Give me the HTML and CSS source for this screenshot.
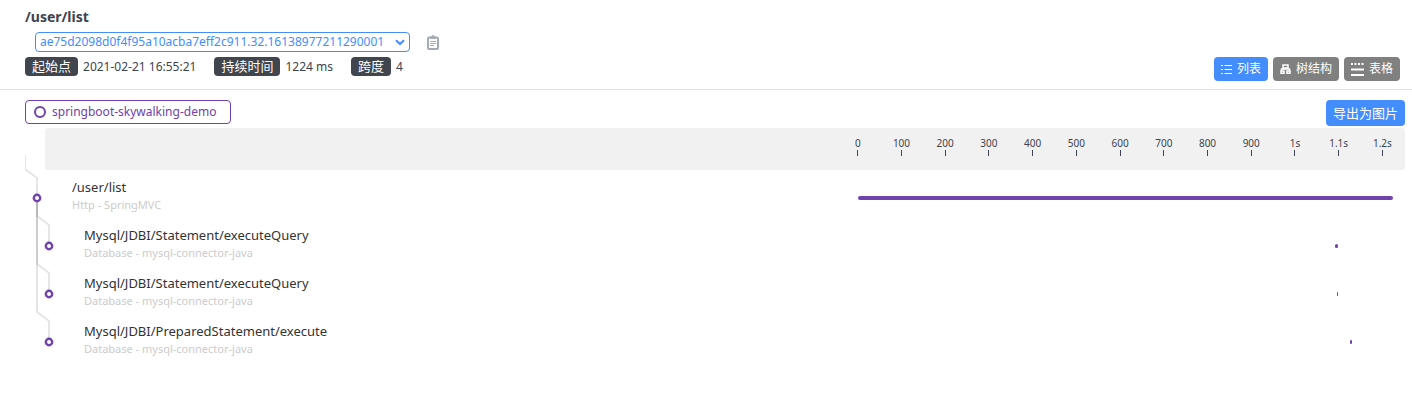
FILE: index.html
```html
<!DOCTYPE html>
<html lang="zh-CN">
<head>
    <meta charset="UTF-8">
    <meta name="viewport" content="width=device-width, initial-scale=1.0">
    <title>/user/list</title>
    <link rel="stylesheet" href="styles.css">
</head>
<body>
    <header class="trace-header">
        <div class="trace-info">
            <h1 class="trace-title">/user/list</h1>
            <div class="trace-id">
                <div class="select-box">
                    <select class="trace-select" aria-label="Trace ID">
                        <option>ae75d2098d0f4f95a10acba7eff2c911.32.16138977211290001</option>
                    </select>
                    <svg class="select-arrow" width="10" height="7" viewBox="0 0 10 7" aria-hidden="true"><path d="M1 1.200 5 5l4-3.800" fill="none" stroke="currentColor" stroke-width="2"/></svg>
                </div>
                <button type="button" class="copy" aria-label="Copy">
                    <svg width="12" height="15" viewBox="0 0 12 15"><rect x="1" y="2.500" width="10" height="11.500" rx="1" fill="none" stroke="currentColor" stroke-width="2"/><path d="M3 1.500h1.500a1.500 1.500 0 0 1 3 0H9V4H3z" fill="currentColor"/><path d="M3 6.500h6M3 8.500h6M3 10.500h4" stroke="currentColor"/></svg>
                </button>
            </div>
            <dl class="facts">
                <div class="fact"><dt>起始点</dt><dd>2021-02-21 16:55:21</dd></div>
                <div class="fact"><dt>持续时间</dt><dd>1224 ms</dd></div>
                <div class="fact"><dt>跨度</dt><dd>4</dd></div>
            </dl>
        </div>
        <div class="views">
            <button type="button" class="btn btn-active">
                <svg class="icon-list" width="11" height="11" viewBox="0 0 11 11"><path d="M0 1.500h2M3.500 1.500H11M0 5.500h2M3.500 5.500H11M0 9.500h2M3.500 9.500H11" stroke="currentColor"/></svg>列表</button>
            <button type="button" class="btn">
                <svg class="icon-tree" width="11" height="10" viewBox="0 0 11 10"><path d="M3 1h5v3H3zM1.500 7V5h8v2M5.500 4v1" fill="none" stroke="currentColor" stroke-width="1.500"/><path d="M1 7h3v2.200H1zM7 7h3v2.200H7z" fill="none" stroke="currentColor" stroke-width="1.500"/></svg>树结构</button>
            <button type="button" class="btn">
                <svg class="icon-table" width="13" height="13" viewBox="0 0 13 13"><path d="M0 1h2M3.500 1h2M7 1h2M10.500 1h2M0 6.500h13M0 12h13" stroke="currentColor" stroke-width="2"/></svg>表格</button>
        </div>
    </header>

    <main class="trace">
        <div class="toolbar">
            <span class="service"><i class="service-dot"></i>springboot-skywalking-demo</span>
            <button type="button" class="btn btn-export">导出为图片</button>
        </div>

        <div class="chart">
            <div class="axis">
                <div class="axis-time">
                    <ol class="ticks">
                        <li>0</li>
                        <li>100</li>
                        <li>200</li>
                        <li>300</li>
                        <li>400</li>
                        <li>500</li>
                        <li>600</li>
                        <li>700</li>
                        <li>800</li>
                        <li>900</li>
                        <li>1s</li>
                        <li>1.1s</li>
                        <li>1.2s</li>
                    </ol>
                </div>
            </div>

            <svg class="tree" width="32" height="220" viewBox="0 0 32 220" aria-hidden="true">
                <g class="links">
                    <path d="M0 27v14l12 9v20"/>
                    <path d="M12 70v18l12 9v21"/>
                    <path d="M12 70v66l12 9v21"/>
                    <path d="M12 70v114l12 9v21"/>
                </g>
                <g class="nodes">
                    <circle cx="12" cy="70" r="3.200"/>
                    <circle cx="24" cy="118" r="3.200"/>
                    <circle cx="24" cy="166" r="3.200"/>
                    <circle cx="24" cy="214" r="3.200"/>
                </g>
            </svg>

            <ul class="spans">
                <li class="span">
                    <div class="span-text">
                        <div class="span-name">/user/list</div>
                        <div class="span-type">Http - SpringMVC</div>
                    </div>
                    <div class="span-time"><div class="bar" style="margin-left: 0%; width: 100%"></div></div>
                </li>
                <li class="span child">
                    <div class="span-text">
                        <div class="span-name">Mysql/JDBI/Statement/executeQuery</div>
                        <div class="span-type">Database - mysql-connector-java</div>
                    </div>
                    <div class="span-time"><div class="bar" style="margin-left: 89.2%; width: 0.49%"></div></div>
                </li>
                <li class="span child">
                    <div class="span-text">
                        <div class="span-name">Mysql/JDBI/Statement/executeQuery</div>
                        <div class="span-type">Database - mysql-connector-java</div>
                    </div>
                    <div class="span-time"><div class="bar" style="margin-left: 89.5%; width: 0.25%"></div></div>
                </li>
                <li class="span child">
                    <div class="span-text">
                        <div class="span-name">Mysql/JDBI/PreparedStatement/execute</div>
                        <div class="span-type">Database - mysql-connector-java</div>
                    </div>
                    <div class="span-time"><div class="bar" style="margin-left: 92%; width: 0.25%"></div></div>
                </li>
            </ul>
        </div>
    </main>
</body>
</html>
```

FILE: styles.css
```css
* {
    box-sizing: border-box;
}

body {
    margin: 0;
    background-color: #fff;
    color: #3d444f;
    font-family: "Noto Sans", "Noto Sans CJK SC", sans-serif;
    font-size: 12px;
    line-height: 18px;
}

h1, dl, dd, ol, ul {
    margin: 0;
    padding: 0;
    list-style: none;
}

button, select {
    font: inherit;
    cursor: pointer;
}

/* header */
.trace-header {
    display: flex;
    justify-content: space-between;
    align-items: flex-end;
    padding: 8px 12px 8px 25px;
    border-bottom: 1px solid #e2e2e2;
}

.trace-title {
    font-size: 14px;
    line-height: 18px;
}

.trace-id {
    display: flex;
    align-items: center;
    gap: 17px;
    margin: 6px 0 5px 10px;
}

.select-box {
    position: relative;
    color: #448dfe;
}

.trace-select {
    display: block;
    width: 375px;
    height: 20px;
    padding: 0 18px 0 4px;
    border: 1px solid #448dfe;
    border-radius: 4px;
    appearance: none;
    background-color: #fff;
    color: inherit;
}

.select-arrow {
    position: absolute;
    top: 7px;
    right: 5px;
    pointer-events: none;
}

.copy {
    display: flex;
    padding: 0;
    border: none;
    background: none;
    color: #a5abb5;
}

.facts {
    display: flex;
    gap: 18px;
    margin-bottom: 5px;
}

.fact {
    display: flex;
    gap: 5px;
    line-height: 19px;
}

.fact dt {
    padding: 0 7px;
    border-radius: 4px;
    background-color: #40454e;
    color: #fff;
    font-size: 13px;
}

.views {
    display: flex;
    gap: 5px;
}

.btn {
    display: flex;
    align-items: center;
    gap: 5px;
    height: 24px;
    padding: 0 7px;
    border: none;
    border-radius: 4px;
    background-color: #808080;
    color: #fff;
}

.btn-active, .btn-export {
    background-color: #448dfe;
}

.btn-export {
    height: 26px;
    font-size: 13px;
}

/* trace */
.trace {
    padding: 10px 7px 0 25px;
}

.toolbar {
    display: flex;
    justify-content: space-between;
    align-items: flex-start;
    height: 28px;
}

.service {
    display: flex;
    align-items: center;
    gap: 6px;
    height: 24px;
    padding: 0 14px 0 8px;
    border: 1px solid #6f42ae;
    border-radius: 4px;
    color: #6f42ae;
}

.service-dot {
    width: 12px;
    height: 12px;
    border: 2px solid #6f42ae;
    border-radius: 50%;
}

.chart {
    display: grid;
    grid-template-columns: 20px 1fr 39.65%;
    grid-template-rows: 42px auto;
}

.axis {
    display: grid;
    grid-template-columns: subgrid;
    grid-column: 2 / 4;
    grid-row: 1;
    border-radius: 3px;
    background-color: #f1f1f1;
}

.axis-time {
    grid-column: 2;
    padding: 6px 12px 0 0;
}

/* one cell per 100 ms of the 1224 ms, centered on its value */
.ticks {
    display: flex;
    width: 106.2%;
    margin-left: -4.1%;
}

.ticks li {
    flex: 1 1 0;
    font-size: 10px;
    text-align: center;
}

.ticks li::after {
    content: "";
    display: block;
    width: 1px;
    height: 6px;
    margin: -2px auto 0;
    background-color: #3d444f;
}

.tree {
    grid-column: 1 / 3;
    grid-row: 1 / 3;
}

.links {
    fill: none;
    stroke: #000;
    stroke-opacity: 0.1;
    stroke-width: 2;
}

.nodes {
    fill: #fff;
    stroke: #6f42ae;
    stroke-width: 2.4;
}

.spans {
    display: grid;
    grid-template-columns: subgrid;
    grid-column: 1 / 4;
    grid-row: 2;
    padding-top: 4px;
}

.span {
    display: grid;
    grid-template-columns: subgrid;
    grid-column: 1 / 4;
    height: 48px;
}

.span-text {
    grid-column: 1 / 3;
    padding: 4px 0 0 47px;
}

.child .span-text {
    padding-left: 59px;
}

.span-name {
    color: #333;
    font-size: 13px;
}

.span-type {
    color: #ccc;
    font-size: 11px;
}

.span-time {
    padding: 22px 12px 0 0;
}

.bar {
    height: 4px;
    border-radius: 2px;
    background-color: #6f42ae;
}
```
